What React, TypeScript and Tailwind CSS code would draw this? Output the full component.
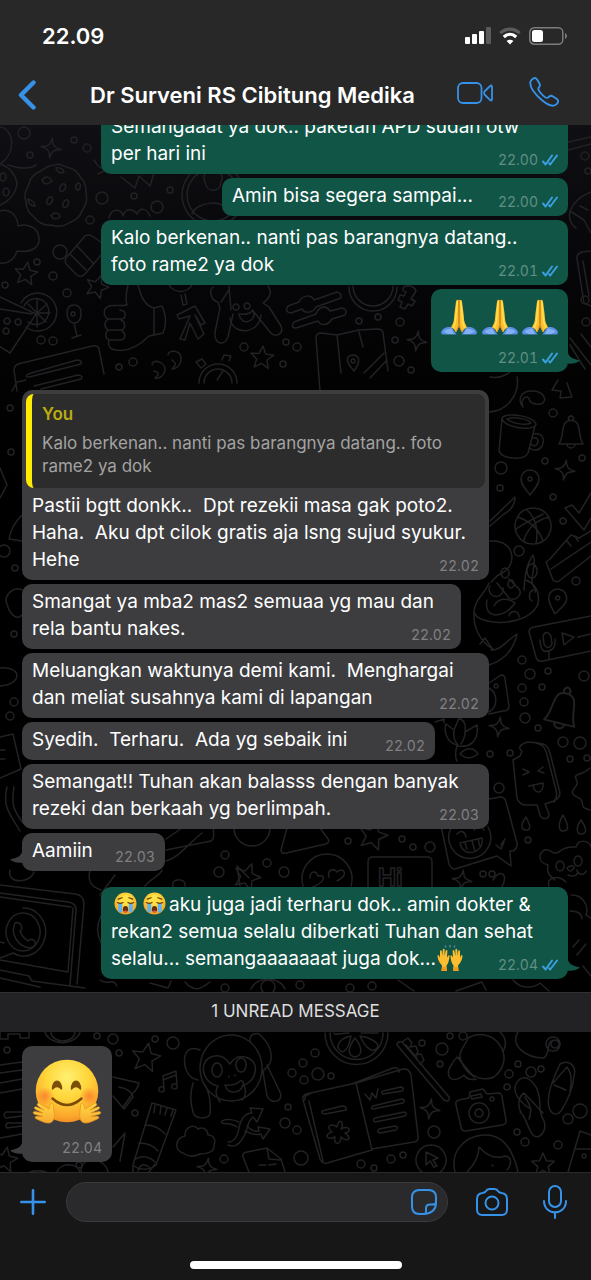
import type { ReactNode } from 'react';

type IconProps = { className?: string };

/* ---------- chat wallpaper ---------- */

const dots: [number, number, number][] = [
  [24, 133, 6], [30, 155, 3], [74, 140, 3], [87, 148, 4], [102, 198, 6], [134, 196, 3], [170, 190, 3], [157, 207, 6],
  [90, 220, 4], [60, 252, 7], [37, 262, 3], [53, 276, 4], [67, 293, 4], [5, 285, 3], [41, 340, 4], [53, 341, 4],
  [244, 347, 4], [286, 342, 3], [297, 347, 4], [133, 362, 4], [119, 367, 3], [359, 321, 3], [378, 317, 3], [400, 322, 4],
  [395, 340, 3], [399, 361, 5], [411, 370, 3], [283, 364, 3], [585, 156, 4], [588, 171, 3], [585, 300, 4], [586, 322, 4],
  [10, 408, 3], [11, 452, 3], [4, 551, 6], [15, 568, 3], [14, 634, 3], [14, 702, 4], [10, 716, 4], [553, 413, 4],
  [501, 468, 6], [500, 488, 3], [545, 461, 3], [582, 458, 3], [553, 497, 3], [563, 521, 3], [519, 551, 5], [576, 581, 4],
  [522, 660, 4], [530, 674, 5], [548, 671, 3], [522, 688, 4], [542, 687, 3], [584, 676, 5], [524, 702, 4], [525, 718, 5],
  [538, 728, 3], [563, 742, 5], [580, 743, 6], [490, 754, 3], [510, 753, 3], [570, 759, 3], [587, 758, 3], [499, 788, 5],
  [225, 855, 4], [219, 872, 5], [267, 863, 4], [284, 872, 5], [348, 841, 3], [402, 839, 3], [413, 847, 3], [430, 847, 5],
  [528, 840, 3], [483, 874, 3], [492, 874, 3], [268, 987, 7], [300, 985, 4], [350, 988, 4], [372, 986, 4], [225, 988, 4],
  [97, 1036, 3], [113, 1039, 5], [155, 1039, 3], [173, 1043, 6], [119, 1053, 3], [7, 1050, 3], [135, 1113, 3],
  [292, 1073, 4], [288, 1107, 3], [285, 1123, 5], [297, 1130, 4], [224, 1159, 4], [303, 1063, 4], [315, 1053, 4],
  [318, 1074, 6], [304, 1080, 4], [331, 1076, 3], [422, 1043, 3], [442, 1049, 6], [440, 1064, 3], [450, 1036, 3],
  [463, 1036, 4], [509, 1074, 4], [518, 1064, 3], [531, 1072, 5], [541, 1069, 3], [507, 1087, 3], [580, 1111, 7],
  [568, 1119, 5], [517, 1132, 3], [525, 1142, 4], [558, 1145, 4], [434, 1132, 6], [301, 1158, 7], [361, 1164, 4],
  [374, 1168, 3], [391, 1159, 4], [403, 1155, 3], [79, 1165, 3],
];

const stars: [number, number, number, number][] = [
  [26, 274, 12, 8], [97, 287, 12, 20], [262, 358, 12, 5], [373, 836, 15, 15], [146, 1058, 15, 10], [543, 1165, 12, 0],
  [247, 877, 14, 20], [5, 1160, 13, 10],
];

const sparkles: [number, number][] = [
  [51, 148], [417, 341], [565, 470], [499, 727], [430, 1109], [462, 880], [207, 1168],
];

const starPath = 'M0-1 .28-.36 .95-.31 .43.13 .59.81 0 .45-.59.81-.43.13-.95-.31-.28-.36Z';
const sparklePath = 'M0-10C1-3 3-1 10 0 3 1 1 3 0 10-1 3-3 1-10 0-3-1-1-3 0-10Z';
const bellPath = 'M-12 12C-8 6-9-2-7-7-5-13 5-13 7-7 9-2 8 6 12 12ZM-4 12a4 4 0 0 0 8 0M-2-12a2.500 2.500 0 1 1 4 0';
const pinPath = 'M0 12C-6 4-9 1-9-4a9 9 0 0 1 18 0C9 1 6 4 0 12ZM-2-4a2 2 0 1 0 4 0 2 2 0 1 0-4 0';

const doodles = [
  /* cookie */
  'M55 165c6-3 10 3 15 3 6 1 9 7 11 10 5 5 5 10 5 16 2 7-1 12-4 17-2 7-8 10-13 12-6 4-12 4-18 2-8 1-13-3-17-8-6-4-8-10-8-16-3-7 1-12 3-17 1-8 7-11 12-13 5-4 9-6 14-6M42 180c4-5 8-3 10 1-4 4-8 4-10-1M60 187c3-6 7-3 5 2-3 4-6 3-5-2M47 200c3-6 7-3 5 2-3 4-6 3-5-2M63 203c3-6 7-3 5 2-3 4-6 3-5-2M76 185c3-4 5-1 4 3-2 4-5 2-4-3M51 215c5-4 9-1 9 2-4 3-8 2-9-2M28 199c4 1 7 4 7 7-4 0-7-3-7-7M56 168c4-1 7 1 8 4-4 2-7 0-8-4',
  /* cloud and planet at the left edge */
  'M0 211c9-3 18 4 18 15 9-3 20 1 21 12 1 10-8 15-22 13-3 9-9 13-17 12M0 127c14 2 17 26 0 37M0 164c9 3 15 10 17 19-1 11-8 18-17 22M3 173a3 4 0 1 0 .1 0M6 188a3 4 0 1 0 .1 0',
  /* spool and megaphone */
  'M8 165c9 3 20 5 28 0M94 160c6 12 18 13 31 10M98 174l16-8M121 177l14 11 4-12 11 10 4-13',
  /* person */
  'M213 164a31 31 0 1 0 .1 0M213 169a26 26 0 1 0 .1 0M205 182a9 9 0 1 1 16 0c0 10-14 12-16 0M192 214c5-13 32-16 41 0M109 218c2-10 12-10 14-2 2-8 10-8 14-2 3-7 10-6 13 2',
  /* eraser */
  'M66 258 85 236q3-2 7 0l10 7M66 258q-2 4 1 7l10 10q4 3 8-1l17-20M70 254l16 16M77 246l16 17',
  /* pizza and citrus */
  'M0 297 36 314 10 353-4 344M0 309 32 314M7 318a3 3 0 1 0 .1 0M18 319a3 3 0 1 0 .1 0M6 328a3 3 0 1 0 .1 0M21 303A19 19 0 1 1 26 327M24 306a13 13 0 1 1 4 16M37 313 28 304M37 313V299M37 313 47 304M37 313h13M37 313l9 9M37 313v14',
  /* glass */
  'M67 313c0-6 3-8 7-8s7 2 7 8c0 8-4 10-7 10s-7-3-7-10M74 323l3 13M72 338l9-3M73 312a2 2 0 1 0 .1 0',
  /* thumbs up */
  'M128 285c-2 8-3 14-1 20-9 2-18-2-22 4-2 6 1 9 3 10-4 3-4 8 0 11-4 4-2 9 1 10-2 6 2 10 7 10 12 2 24-5 33-14l5-1V308c-9-2-13-11-16-23M154 308l8-2c4 9 5 18 1 27l-9 2M108 319h12c7 0 7-8 0-9M108 330h12c6 0 6-8 1-10M110 340h10c6 0 6-7 2-9',
  /* magnifier, arrow */
  'M169 285a13 12 0 0 0 23 0M181 295l2 10 4-1-2-10M180 339l10-23-11 3-2-4 18-9 10 17-4 2-6-10 9 19-6 5-8-16-5 17Z',
  /* monkey hands */
  'M213 287c-5 4-1 14 5 15l2 6-5 24c-1 12 9 15 13 5l5-23M221 302l8-12M229 286l2 24M268 286c5 7 1 13-5 17l6 4 12 19c3 9-6 12-11 6l-16-20M236 304a3 3 0 1 0 .1 0M247 303a3 3 0 1 0 .1 0M239 314c6 1 11 0 14-4 5 12-12 17-14 4M230 318c2 18 29 17 31-3',
  /* sliders */
  'M288 306l11-4c3-7 12-8 15-2l23-8q5 1 4 6l-25 9c-3 6-11 7-14 2l-11 4q-7-1-3-7M294 322l22-8c3-8 10-9 14-3l12-3q6 1 3 7l-13 4c-5 8-12 6-14 2l-22 7q-6 0-2-6',
  /* clock, bolt, phone */
  'M349 287a24 24 0 0 0 48 0M353 286a20 20 0 0 0 40 0M404 287c5-3 11 0 12 4l-5 8 4 2-3 5-4-2-3 5-5-2 2-5-4-2 2-5 4 1 2-4q-5-1-2-5',
  /* map */
  'M320 391 316 338q0-5 5-5l16 2 22-5 18-1q6 0 6 4l5 38M337 335l4 38M359 332l4 15M354 371c-8-9-9-14-2-16 8 0 9 6 2 16M353 359a2 2 0 1 0 .1 0M364 373l20-20M370 378l17-18',
  /* card, quotes, stopwatch */
  'M17 391 14 370q0-4 4-6l74-18q6-1 7 3l5 25M28 374l49-14q5 0 4 4l-52 13q-5 0-1-3M34 386l44-11q6 1 3 4l-40 10M152 365c0-7 14-3 13 5-1 6-6 9-10 8 5-4 4-6-1-7M168 355c0-6 13-5 13 3s-5 11-9 11c5-5 4-6 0-9M199 383a19 19 0 1 1 38 0M204 383a14 14 0 1 1 28 0M222 360l2-5 7 1-2 5M196 362l6-3 4 5-5 4ZM217 380l6-9',
  /* right edge */
  'M568 142l23-5M568 150l23-6M591 192c-8 3-17 9-21 19l14 9 7 13M570 211c-2 8 2 15 6 17M580 206l8 4M577 259q-1-5 5-7l9-1M577 259l7 44 7 3M583 261l6 35M570 338l21 27M570 345l15 24M581 334l10 13',
  /* mug, crescent, bolt, clock */
  'M502 418 499 451c2 8 25 10 29 2l7-27M502 418c5-7 35-1 34 7-4 7-34 2-34-7M507 419c8-3 21 0 24 4-6 3-20 0-24-4M534 434c9-2 11 6 8 12-3 5-9 5-12 2M533 438c5-1 6 3 4 6-2 3-4 2-6 0M531 391c-10 0-14 9-8 16-3-7 2-12 6-9 0 5 7 8 14 5 5-6-3-13-12-12M558 380l-6 10 9 1-1 7 12-1-5-14M490 377c12 2 22-4 24-12M489 412a30 30 0 0 0 28-35',
  /* basketball and check */
  'M533 508a18 18 0 1 0 .1 0M518 517c11 4 21 12 25 24M549 517c-13 3-22 12-25 23M527 510c8 7 12 20 9 33M516 529c10-7 20-11 27-15M565 508l7-3 7 8 12-20M565 508l19 22 7-12',
  /* sneaker */
  'M546 562l4-3 21-24 8 3 12-7M546 562l7 18q3 3 6 1l32-25M551 569l40-27M567 541l4 5M575 536l3 5M490 521l25-24q0 11-11 17l-14 12M490 541c25-2 28 24 12 32-7 3-8 7-11 9M505 568a4 5 0 1 0 .1 0M524 590c1-15 2-25 9-35 4 8-2 20-1 26 1 7 4 8 3 11M532 564a5 7 0 1 0 .1 0M511 580a3 4 0 1 0 .1 0',
  /* octopus */
  'M489 583c-5 12-14 16-15 29 4 15 55 15 64-8 2-12-3-20-12-24M487 600c-2 10 2 14 8 15 9 0 15-5 20-12-8-6-17-5-21 3M490 586a7 7 0 1 0 13 2M474 612c-1 15 6 30 19 37M491 650c9 1 14-8 26-16-3 14-12 26-28 31M480 644l5-6 8 12M509 616a5 5 0 0 1 10 1M533 590a5 6 0 0 0-1 11M497 583l12 15c6 4 14-3 10-9l-10-10',
  /* voice note card */
  'M591 616l-57 11q-5 1-5 5l7 25q1 5 7 4l48-10M543 636q3-7 8 0l1 8q-4 7-8 0ZM540 640q1 14 8 11 8-1 7-12M549 652v7M562 633l12 4-10 8ZM578 637l13-3',
  /* camera, tulip */
  'M489 683l12-8q4 0 4 4l4 27q0 5-6 5l-14 3M489 688a14 14 0 0 1 0 24M496 684a2 2 0 1 0 .1 0M457 761c-3-5-1-10 0-16-12-3-13-16-11-21l8 6 5-12c6 3 7 7 6 14l12-7c2 15-6 23-19 21M460 754c6-7 14-7 18 0-7 5-12 5-18 0M454 730c-1 7 0 11 4 15M465 732c0 5-2 9-4 12M435 722l9-3v4',
  /* ice pop */
  'M522 751c-6-4 1-8 6-9l10 1c8 1 10 3 12 10l9 36q3 8-5 12l-9 3 4 10c0 6-7 6-9 1l-3-10-12 0q-6-1-8-7l-4-38 7-4ZM536 743c8 2 9 5 11 12l9 35q2 6-2 12M523 769l6 3-6 3M543 767l-5 4 6 2M529 786l14-3c1 10-8 13-10 2M590 768c-8 8-17 5-14 11 3 5 0 7-3 11-3 7 7 6 9 11 1 5-1 7 9 9',
  /* laughing bubble */
  'M489 799l11-2q5 0 6 5l11 41q1 5-4 8l-3 0 1 15-14-10-42 13q-4 0-6-5l-9-43M451 828a21 21 0 1 0 37-1M457 834c4-5 8-2 9 3M474 830c4-6 8-3 10 0M460 843l22-5c3 15-19 21-22 5M465 843l2 6M472 841l3 10M478 839l2 7M496 845l5 4 3-7M501 845l4-6',
  /* drops */
  'M526 817c5 9 5 13 0 13s-6-5 0-13M563 815c6 11 6 15 1 16s-7-6-1-16M581 820c6 9 6 13 1 14s-7-6-1-14',
  /* bear */
  'M555 880c-8-6-8-10-7-15-13-3-8-17 0-15 5 1 4 5 11 2 6-6 14-5 17-5 3-9 14-6 15 0M560 861a4 5 0 1 0 .1 0M578 856a4 5 0 1 0 .1 0M567 868c3-3 8-3 7 0-3 4-5 4-7 0M568 875c7 3 11-1 9-5 1 5 7 6 9 1',
  /* shapes beneath the short reply */
  'M234 828a18 18 0 1 0 36 0M287 828l-6 22q0 4 5 3l40-9q4-2 2-5l-8-11M166 850l45-9q4-2 2-13M166 861c12-3 20-15 36-28M166 839l16-11M303 886a25 25 0 1 1 48 0M310 878c0-7 6-8 8-2 7-2 9 5-5 11M329 877c-2-8 5-9 8-5 6-6 13 3 0 9M368 887V862q0-5 5-5h54q5 0 5 5v25M240 886l-3-20 12 12M145 886c6-8 15-10 17-16M185 886c2-8-15-9-12 1M493 880c7-12 16-6 9 7M549 886c-3-8 8-12 17-4M10 870c-4 14 20 14 24 2',
  /* left edge between bubbles */
  'M12 391l5-9 9-2M22 590c-8-4-19 5-15 14 2 8 9 18 15 11M0 468l7 17-7 13M22 515c-9 9-12 17-13 24l13 2M0 668c22-2 23 16 0 18M0 737l13-3 8 35-21 9M0 750h5M0 759h5M7 787c-5 21 4 28 13 44M14 787c-3 18 0 24 9 36',
  /* laptop */
  'M0 885l75 9q9 1 9 10l-7 80M0 893l68 9q8 1 8 8l-6 75M0 897l71 10M0 960l68 12 5-64M0 970l29 6 3 5 53 7M0 978l40 9M23 908a22 24 0 1 1-10 45l-13 5M4 943l-4-1M23 913a17 19 0 1 0 .1 0M15 923c5-3 9 6 5 8 2 6 5 8 8 10 4-4 10 1 6 5-9 7-26-9-19-23',
  /* strip above the unread bar */
  'M100 980c8 6 13-3 17 6M150 983l18 5q2-4 3-7M185 982c11 13 19 4 25 0M251 989a18 15 0 0 1 34 0M398 980l16 11M456 991l26-9 4 8M513 980c8 10 21 8 27 3l9 8M571 895a15 15 0 0 1 15 20l5 3M570 911c8 0 12 3 12 8M573 947l6-7M577 955l9-11M583 966l8 10M100 895l15-20M90 870c-3 12 2 17 11 20M101 916a30 30 0 0 0 0 27',
  /* left of the last sticker message */
  'M0 1065l22-3M0 1073l22-3M0 1083l22-4M0 1093l22-4M22 1112H6q-4 3 0 6l16-2M22 1123H7q-2 3 0 5l15-2M0 1138l22-4M0 1031v8h8v-5h12v4h9v-7M45 1032a18 14 0 0 0 35 0M51 1032a12 9 0 0 0 24 0M113 1077l26 6q-2 7-6 10l-10 14M119 1087q12 2 14 10l-9 12-11-13M113 1147l12-14-5 28M108 1172a15 15 0 0 0-15-12c-8 0-12 5-12 12M57 1172a12 10 0 0 1 23 0M30 1172a15 8 0 0 1 16 0',
  /* music note */
  'M164 1088l-1-12 13-5 1 14M163 1080l13-5M164 1088c-3-3-6 0-5 3 3 2 6 1 5-3M177 1085c-4-3-6 0-5 3 3 2 6 1 5-3',
  /* monkey */
  'M231 1035a31 33 0 1 0 .1 0M220 1102c-4-6-5-12-2-16-18-4-20-28-3-30 8-1 12 4 15 8 5-8 12-9 18-6 13 6 7 24-4 27 2 5 2 11-2 15M217 1063a5 7 0 1 0 .1 0M241 1058a5 7 0 1 0 .1 0M229 1076l0 1M235 1075l0 1M225 1085q10 1 15-4 4-1 3 4c-3 9-15 10-18 0M198 1080c-11-2-15-14-13-24 2-8 9-9 15-6M193 1083c-3 10-3 19 0 29 2 8 15 7 17 2 1-12 0-21-5-29M250 1042c-1-8 7-12 13-4 8 8 11 21 5 28l-5 5M263 1072l4 24c4 9 17 6 13-4l-13-27',
  /* toothpaste */
  'M152 1103l24 7-20 55c-7 6-18 5-23 0ZM155 1105l-1 8M161 1106l-1 8M167 1108l-2 7M173 1110l-2 6M145 1125c8 0 15 3 20 9M139 1143c8 0 14 2 19 8M134 1160c8-6 16-3 21 2M138 1171q3-10 11-4M133 1165v8M155 1164l-6 8',
  /* cloud */
  'M183 1153c-9-3-8-15 2-17 0-10 9-12 13-7 6-3 10 2 10 6 6 0 8 5 6 10 1 9-12 9-14 9-8 4-13 2-17-1',
  /* crossing arrows */
  'M228 1142c8 0 10-8 11-14 3-15 11-15 13-15l-2-5 13 1-6 13-4-5c-6 4-4 9-8 17-4 9-10 14-17 11M237 1127c-9-6-17-1-15-6 4-3 13-1 17 1M247 1126c5 5 9 6 12 5l-1-4 12 2-7 10-2-5c-6 2-11-1-16-3',
  /* document */
  'M249 1172l-6-15q-1-4 4-5l20-4 14 11 4 13M267 1148l2 11 12 1M259 1165h7M269 1165l7-1',
  /* citrus slice */
  'M325 1033a31 31 0 0 0 63 0M330 1033a26 26 0 0 0 53 0M355 1038c-5 7-10 17 0 19 10-2 5-13 0-19M351 1036c-11 2-18 11-9 16 5-1 8-9 9-16M360 1036c5 11 12 18 17 12 4-5-8-11-17-12M349 1033c-8 0-15 3-15 0M361 1033h17',
  /* toothbrush */
  'M397 1045q0-4 5-3l47 55q1 6-5 3l-47-55M402 1042l6-4 4 5-2 4 6-1 2 6-2 3 5-1 3 6-4 4M406 1045l11 13',
  /* acorn and bauble */
  'M468 1038c10-6 24-4 31 6 9 12 5 25-5 33-7 3-15 2-19-1-9-2-15-15-15-21 1-7 6-11 8-17M460 1058q-4-2-8 6-6 8-2 14 6 4 14-3 4 6 12 4M457 1057l17 20M500 1032q9 8 3 20M518 1032c-8 13 7 26 26 26 6-5 3-14 7-17M553 1037a7 7 0 1 0 .1 0M555 1040a4 4 0 1 0 .1 0',
  /* sandals */
  'M531 1109c-8-4-17-13-16-22 3-11 12-12 18-4 6 6 7 14 7 24q0 7 4 14c3 9-3 18-10 15-6-5-9-22-14-24M521 1113c-4-9-2-17 3-20l19 20M525 1097c6 9 7 14 4 22M549 1107c-3-12 4-28 11-43 9-5 17 2 14 12-1 12-6 24-13 35-4 5-10 4-12-4M553 1083l14-16c4 5 5 14 3 24M554 1085l12 5',
  /* camera */
  'M456 1105q-1-4 3-5l10-2 1-6 13-3 4 5 11-1q4 0 4 4l4 23q1 4-4 5l-36 6q-5 0-5-4ZM471 1096l10-2 1 3-10 2ZM479 1103a10 10 0 1 0 .1 0M479 1109a4 4 0 1 0 .1 0M492 1097a2 2 0 1 0 .1 0',
  /* notebook */
  'M303 1100q-1-4 3-6l50-11 16 67-45 13q-5 1-7-4ZM356 1083l47-14q6-1 8 6l7 61q1 5-4 6l-42 7M352 1084l41-16q7-1 6 4M309 1101l14 60M305 1100q-1-5 5-6M322 1111l20-5q5 0 4 4l-21 4q-4 0-3-3M365 1094l5 6 2-7 4 5 2-9M383 1091l18-4q4 1 1 4l-19 3q-3-1 0-3M373 1106l29-7q4 1 1 4l-30 6q-3-1 0-3M375 1118l29-6q4 1 1 4l-30 6q-3-2 0-4M379 1129l16-3q4 1 1 4l-16 3q-4-1-1-4M337 1127c2-10 8-5 4 2 9-4 11 3 4 4 8 5 2 10-4 4 0 9-8 8-6 0-9 4-11-3-3-5-7-6-1-9 5-5',
  /* cursor, face, box */
  'M431 1145a15 15 0 1 0 .1 0M426 1152l12 6-5 2 4 6-3 1-4-6-4 4ZM455 1172c-5-20 9-36 29-37 19-1 29 15 34 37M467 1172c6-6 12-14 12-25 9 10 18 12 26 9 8 1 6 10 2 14M492 1165l1 1M568 1172l12-41 11 4M575 1149h16M584 1154a2 2 0 1 0 .1 0',
].join('');

function Wallpaper() {
  return (
    <svg
      aria-hidden="true"
      className="absolute inset-0 h-full w-full"
      viewBox="0 125 591 1047"
      preserveAspectRatio="xMidYMax slice"
      fill="none"
      stroke="#222225"
      strokeWidth="1.500"
      strokeLinecap="round"
      strokeLinejoin="round"
    >
      {dots.map(([x, y, r]) => (
        <circle key={`${x}-${y}`} cx={x} cy={y} r={r} />
      ))}
      {stars.map(([x, y, r, a]) => (
        <path
          key={`${x}-${y}`}
          d={starPath}
          transform={`translate(${x} ${y}) rotate(${a}) scale(${r})`}
          vectorEffect="non-scaling-stroke"
        />
      ))}
      {sparkles.map(([x, y]) => (
        <path key={`${x}-${y}`} d={sparklePath} transform={`translate(${x} ${y}) rotate(8)`} />
      ))}
      <path d={bellPath} transform="translate(571 432)" />
      <path d={bellPath} transform="translate(563 708) rotate(14) scale(1.300)" />
      <path d={pinPath} transform="translate(530 483)" />
      <path d={pinPath} transform="translate(557 602) rotate(10)" />
      <path d={doodles} />
      <text x="378" y="886" fontSize="24" fontFamily="Inter, sans-serif" fontWeight="700">
        Hi
      </text>
    </svg>
  );
}

/* ---------- icons ---------- */

const line = { fill: 'none', stroke: 'currentColor', strokeLinecap: 'round', strokeLinejoin: 'round' } as const;

const SignalIcon = ({ className }: IconProps) => (
  <svg className={className} viewBox="0 0 26 18" fill="#fff" aria-hidden="true">
    <rect x="0" y="10" width="5" height="7" rx="1" />
    <rect x="7" y="7" width="5" height="10" rx="1" />
    <rect x="14" y="4" width="5" height="13" rx="1" />
    <rect x="21" y="0" width="5" height="17" rx="1" fill="#5b5b5b" />
  </svg>
);

const WifiIcon = ({ className }: IconProps) => (
  <svg className={className} viewBox="0 0 22 18" fill="none" strokeWidth="3.200" aria-hidden="true">
    <path d="M1.300 6.200C7 .8 15 .8 20.700 6.200" stroke="#5b5b5b" />
    <path d="M4.800 10C8.500 6.600 13.500 6.600 17.200 10" stroke="#fff" />
    <path d="M11 17.500 7.600 14C9.500 12.300 12.500 12.300 14.400 14Z" fill="#fff" />
  </svg>
);

const BatteryIcon = ({ className }: IconProps) => (
  <svg className={className} viewBox="0 0 38 18" aria-hidden="true">
    <rect x=".8" y=".8" width="33" height="16.400" rx="4.500" fill="none" stroke="#7c7c7c" strokeWidth="1.500" />
    <rect x="3" y="3" width="11" height="12" rx="2.500" fill="#fff" />
    <path d="M36 6q2 .8 2 3t-2 3Z" fill="#7c7c7c" />
  </svg>
);

const BackIcon = ({ className }: IconProps) => (
  <svg className={className} viewBox="0 0 18 30" {...line} strokeWidth="4.400" aria-hidden="true">
    <path d="M15.500 2.500 3 15l12.500 12.500" />
  </svg>
);

const VideoIcon = ({ className }: IconProps) => (
  <svg className={className} viewBox="0 0 36 22" {...line} strokeWidth="1.800" aria-hidden="true">
    <rect x="1" y="1" width="23.500" height="20" rx="5" />
    <path d="M27.500 9.500 33.200 3.900q1.800-1.200 1.800 1V17.100q0 2.200-1.800 1L27.500 12.500q-1-1.500 0-3Z" />
  </svg>
);

const PhoneIcon = ({ className }: IconProps) => (
  <svg className={className} viewBox="0 0 32 32" {...line} strokeWidth="2" aria-hidden="true">
    <path d="M3 2.800C5.500.3 7.500.6 8.800 3L11.300 7.200C12.500 9.300 11.200 10.400 10.200 11.600 9.300 12.900 10.200 14.300 12 16.500 13.900 18.800 15.500 20.600 17.600 21.900 19.700 23 20.700 22 21.900 20.700 23 19.500 24.300 19.800 25.700 20.800L29.700 23.500C31.700 25 31.400 26.700 29.700 28.700 26.300 32.300 20.600 30.600 13.600 24.600 7.200 19 1.400 11.600 1.300 6.400 1.300 4.900 2 3.800 3 2.800Z" />
  </svg>
);

const PlusIcon = ({ className }: IconProps) => (
  <svg className={className} viewBox="0 0 26 26" {...line} strokeWidth="2.600" aria-hidden="true">
    <path d="M13 1.300v23.400M1.300 13h23.400" />
  </svg>
);

const StickerIcon = ({ className }: IconProps) => (
  <svg className={className} viewBox="0 0 26 26" {...line} strokeWidth="2" aria-hidden="true">
    <path d="M25 14V8.500Q25 1 17.500 1h-9Q1 1 1 8.500v9Q1 25 8.500 25H13.500Q25 23.500 25 14ZM14 25c1.500-1.200 1-3.500 1-6q0-3.500 4-3.500c3 0 5 .3 6-1.500" />
  </svg>
);

const CameraIcon = ({ className }: IconProps) => (
  <svg className={className} viewBox="0 0 32 28" {...line} strokeWidth="2" aria-hidden="true">
    <path d="M1 11q0-5.500 5.500-6Q9 4.700 9.800 3.300 11 1 13.500 1h5Q21 1 22.200 3.300 23 4.700 25.500 5 31 5.500 31 11v10.500q0 5.500-5.500 5.500h-19Q1 27 1 21.500Z" />
    <circle cx="16" cy="15" r="6.500" />
  </svg>
);

const MicIcon = ({ className }: IconProps) => (
  <svg className={className} viewBox="0 0 24 34" {...line} strokeWidth="2" aria-hidden="true">
    <rect x="6" y="1" width="12" height="21" rx="6" />
    <path d="M1 16c0 15 22 15 22 0M12 27.500V33" />
  </svg>
);

const ReadTicks = () => (
  <svg className="h-3 w-4" viewBox="0 0 16 12" {...line} stroke="#3b9fe0" strokeWidth="2" role="img" aria-label="Read">
    <path d="M1 7.500 3.600 10.500 10 1.500M7.200 9.300l1 1.200L15 1.500" />
  </svg>
);

/* ---------- emoji ---------- */

const Pray = () => (
  <svg className="h-9 w-9" viewBox="0 0 36 36" role="img" aria-label="Folded hands">
    <path
      id="arm"
      d="M0 33.500C1 29.500 5 27.500 10.500 28L15.500 35.500H1.500Q0 35 0 33.500Z"
      fill="#5b8fe6"
    />
    <path
      id="sleeve"
      d="M2 32.500Q6 29.500 10.500 29.500L13 35H7Z"
      fill="#82b1f5"
    />
    <path
      id="palm-half"
      d="M18 1.200Q15.400-.2 15 2.600L13.400 15 12.800 21.500Q12.500 24 10 28.200 13.500 29.500 15 33.500 18 29.500 18 25Z"
      fill="#fdc030"
    />
    <path id="light" d="M16.300 3 14.900 17Q14.700 24 12.500 28.500" fill="none" stroke="#ffe04c" strokeWidth="1.500" strokeLinecap="round" />
    <use href="#arm" transform="translate(36 0) scale(-1 1)" />
    <use href="#sleeve" transform="translate(36 0) scale(-1 1)" />
    <use href="#palm-half" transform="translate(36 0) scale(-1 1)" />
    <use href="#light" transform="translate(36 0) scale(-1 1)" />
    <path d="M18 1.500V25" stroke="#bf7412" strokeWidth="1.200" />
    <path d="M18 24q-.8 5-3 9M18 24q.8 5 3 9" fill="none" stroke="#e08f1e" strokeWidth="1" />
  </svg>
);

const Sob = () => (
  <svg className="mx-[3px] -mt-1 inline-block h-[23px] w-[23px]" viewBox="0 0 24 24" role="img" aria-label="Loudly crying face">
    <defs>
      <radialGradient id="sob" cx=".5" cy=".35" r=".65">
        <stop offset=".3" stopColor="#ffe345" />
        <stop offset="1" stopColor="#f39a1c" />
      </radialGradient>
    </defs>
    <circle cx="12" cy="12" r="11.500" fill="url(#sob)" />
    <path d="M4.500 11.500h4V21q-2.500 1-4-1ZM15.500 11.500h4V20q-1.500 2-4 1Z" fill="#5eb2f2" />
    <path d="M3.500 11q3 1.800 6 0M14.500 11q3 1.800 6 0M4.500 7.500 8.500 6M15.500 6l4 1.500" fill="none" stroke="#6b3b0c" strokeWidth="1.300" strokeLinecap="round" />
    <ellipse cx="12" cy="18" rx="2.700" ry="3.300" fill="#6b2f0b" />
    <path d="M10 20q2-1.500 4 0-2 2.600-4 0Z" fill="#e85a4d" />
  </svg>
);

const RaisedHands = () => (
  <svg className="-mt-1 inline-block h-7 w-7" viewBox="0 0 28 28" role="img" aria-label="Raising hands">
    <path d="M9 1.500 10 3.500M14 1v2.500M19 1.500 18 3.500" stroke="#5c89a0" strokeWidth="1.300" />
    <path
      id="hand"
      d="M5.500 27 6 21.500Q2 17.500 1.500 12q.3-1.500 1.600-.6L4 14 4 7q1-1.300 1.800 0L6.200 12 6.800 5.500q1-1.300 1.900 0L8.500 12 9.700 6.500q1.200-1 1.700.3L11 13.500l1.300-2q1.600-.6 1.200 1.200Q13 18.500 10.500 21.500l.3 5.500Z"
      fill="#fdbd2e"
    />
    <use href="#hand" transform="translate(28 0) scale(-1 1)" />
    <path d="M5.500 27 6 23h4.600l.2 4ZM22.500 27 22 23h-4.600l-.2 4Z" fill="#f29a1b" />
  </svg>
);

const Hug = () => (
  <svg className="h-[70px] w-[70px]" viewBox="0 0 70 70" role="img" aria-label="Hugging face">
    <defs>
      <radialGradient id="face" cx=".5" cy=".28" r=".75">
        <stop offset="0" stopColor="#fff071" />
        <stop offset=".45" stopColor="#ffd63a" />
        <stop offset=".85" stopColor="#fba52b" />
        <stop offset="1" stopColor="#ee861f" />
      </radialGradient>
      <radialGradient id="cheek">
        <stop offset="0" stopColor="#f9602a" stopOpacity=".6" />
        <stop offset="1" stopColor="#f9602a" stopOpacity="0" />
      </radialGradient>
      <linearGradient id="palm" x1="0" y1="0" x2="0" y2="1">
        <stop offset="0" stopColor="#ffd945" />
        <stop offset="1" stopColor="#f7a930" />
      </linearGradient>
    </defs>
    <circle cx="35" cy="33" r="31.300" fill="url(#face)" />
    <circle cx="13" cy="38" r="9" fill="url(#cheek)" />
    <circle cx="57" cy="38" r="9" fill="url(#cheek)" />
    <path d="M20.500 31c0-10.500 9-10.500 9 0q-4.500-5-9 0ZM39.500 31c0-10.500 9-10.500 9 0q-4.500-5-9 0Z" fill="#7a4f0a" stroke="#7a4f0a" strokeWidth="1.400" strokeLinejoin="round" />
    <path d="M20.500 40.500q14.500 13 29 0" fill="none" stroke="#7a4a07" strokeWidth="2.400" strokeLinecap="round" />
    <path
      id="palm-shape"
      d="M21.500 48c0-3-2.800-3.500-3.300-1L17 51 7.500 45.600c-2.200-1-3.200 1-1.400 2.300L12 52 4.500 49c-2.200-.7-2.800 1.400-.8 2.400L11 55 3 53.600c-2.200-.2-2.300 2-.4 2.600L11 58.500 4.500 58.300c-2 .2-1.800 2 0 2.600C9 62.800 13.500 65.500 17 65c5.200-.8 5.800-6 5.200-9.500Z"
      fill="url(#palm)"
      stroke="#e8921c"
      strokeWidth=".7"
    />
    <use href="#palm-shape" transform="translate(70 0) scale(-1 1)" />
  </svg>
);

/* ---------- messages ---------- */

type BubbleProps = {
  side: 'in' | 'out';
  width: string;
  time: string;
  tail?: boolean;
  quote?: ReactNode;
  className?: string;
  children: ReactNode;
};

function Bubble({ side, width, time, tail, quote, className = '', children }: BubbleProps) {
  const out = side === 'out';
  return (
    <article
      className={`relative max-w-full shrink-0 rounded-[10px] text-white ${out ? 'self-end bg-[#115547]' : 'self-start bg-[#3d3d3f]'} ${width} ${className}`}
    >
      {quote}
      <div className="flow-root px-2.5 pt-1 pb-[7px] text-[19px] leading-[27px] whitespace-pre-wrap">
        {children}
        <span
          className={`float-right mt-3 flex h-[15px] items-center gap-1 text-sm leading-4 tabular-nums ${out ? 'text-[#628f84]' : 'text-[#818183]'}`}
        >
          <time>{time}</time>
          {out && <ReadTicks />}
        </span>
      </div>
      {tail && (
        <svg
          aria-hidden="true"
          className={`absolute bottom-1 h-4 w-4 ${out ? '-right-3' : '-left-3 -scale-x-100'}`}
          viewBox="0 0 16 16"
          fill={out ? '#115547' : '#3d3d3f'}
        >
          <path d="M0 0h4c0 4 4 7 12 8.500C12 12 7 12 3 11.500L0 16Z" />
        </svg>
      )}
    </article>
  );
}

export default function App() {
  return (
    <div className="flex h-screen flex-col bg-black font-['Inter','Liberation_Sans',sans-serif]">
      <header className="shrink-0 bg-[#282828] pb-[7px] text-white">
        <div className="flex h-[72px] items-center justify-between pr-6 pl-[42px]">
          <time className="text-[22px] leading-7 font-semibold">22.09</time>
          <div className="flex items-center gap-2">
            <SignalIcon className="h-[18px] w-[26px]" />
            <WifiIcon className="h-[18px] w-[22px]" />
            <BatteryIcon className="h-[18px] w-[38px]" />
          </div>
        </div>
        <div className="flex h-[46px] items-center pr-8 text-[#3592e8]">
          <button type="button" aria-label="Back" className="flex w-12 shrink-0 pl-[18px]">
            <BackIcon className="h-[30px] w-[18px]" />
          </button>
          <h1 className="flex-1 truncate text-center text-[22px] leading-8 font-semibold text-white">
            Dr Surveni RS Cibitung Medika
          </h1>
          <button type="button" aria-label="Video call" className="mr-9 mb-1 shrink-0">
            <VideoIcon className="h-[22px] w-9" />
          </button>
          <button type="button" aria-label="Voice call" className="mb-1.5 shrink-0">
            <PhoneIcon className="h-[30px] w-[30px]" />
          </button>
        </div>
      </header>

      <main className="relative flex min-h-0 flex-1 flex-col justify-end overflow-hidden bg-linear-to-b from-[#101014] to-black to-50%">
        <Wallpaper />
        <section className="relative flex shrink-0 flex-col gap-1 pr-[23px] pl-[22px]">
          <Bubble side="out" width="w-[467px]" time="22.00">
            {'Semangaaat ya dok.. paketan APD sudah otw\nper hari ini'}
          </Bubble>
          <Bubble side="out" width="w-[346px]" time="22.00">
            Amin bisa segera sampai...
          </Bubble>
          <Bubble side="out" width="w-[467px]" time="22.01">
            {'Kalo berkenan.. nanti pas barangnya datang..\nfoto rame2 ya dok'}
          </Bubble>
          <Bubble side="out" width="w-[137px]" time="22.01" tail>
            <div className="flex h-[45px] justify-between pt-1.5">
              <Pray />
              <Pray />
              <Pray />
            </div>
          </Bubble>

          <Bubble
            side="in"
            width="w-[467px]"
            time="22.02"
            className="mt-[14px]"
            quote={
              <blockquote className="mx-1 mt-1 flex h-[94px] flex-col overflow-hidden rounded-lg border-l-6 border-[#ffeb00] bg-[#2c2c2c] px-2.5 pt-[9px] text-[17px] leading-[23px] text-[#a3a3a3]">
                <strong className="mb-1.5 font-semibold text-[#b9ab10]">You</strong>
                Kalo berkenan.. nanti pas barangnya datang.. foto rame2 ya dok
              </blockquote>
            }
          >
            {'Pastii bgtt donkk..  Dpt rezekii masa gak poto2.\nHaha.  Aku dpt cilok gratis aja lsng sujud syukur.\nHehe'}
          </Bubble>
          <Bubble side="in" width="w-[439px]" time="22.02">
            {'Smangat ya mba2 mas2 semuaa yg mau dan\nrela bantu nakes.'}
          </Bubble>
          <Bubble side="in" width="w-[467px]" time="22.02">
            {'Meluangkan waktunya demi kami.  Menghargai\ndan meliat susahnya kami di lapangan'}
          </Bubble>
          <Bubble side="in" width="w-[413px]" time="22.02">
            {'Syedih.  Terharu.  Ada yg sebaik ini'}
          </Bubble>
          <Bubble side="in" width="w-[467px]" time="22.03">
            {'Semangat!! Tuhan akan balasss dengan banyak\nrezeki dan berkaah yg berlimpah.'}
          </Bubble>
          <Bubble side="in" width="w-[143px]" time="22.03" tail>
            Aamiin
          </Bubble>

          <Bubble side="out" width="w-[467px]" time="22.04" tail className="mt-3">
            <Sob />
            <Sob />
            {'aku juga jadi terharu dok.. amin dokter &\nrekan2 semua selalu diberkati Tuhan dan sehat\nselalu... semangaaaaaaat juga dok...'}
            <RaisedHands />
          </Bubble>
        </section>

        <div className="relative mt-[13px] mb-[14px] flex h-10 shrink-0 items-center justify-center border-t border-[#303033] bg-[#222224] pb-[3px] text-[17px] leading-6 text-[#dededf]">
          1 UNREAD MESSAGE
        </div>

        <section className="relative flex shrink-0 flex-col pb-2.5 pl-[22px]">
          <Bubble side="in" width="w-[90px]" time="22.04" tail>
            <div className="flex h-[78px] pt-2">
              <Hug />
            </div>
          </Bubble>
        </section>
      </main>

      <footer className="flex h-[108px] shrink-0 flex-col border-t border-[#2a2a2b] bg-[#171717] text-[#3592e8]">
        <form className="flex h-[58px] items-center pr-6 pl-5" onSubmit={(e) => e.preventDefault()}>
          <button type="button" aria-label="Attach">
            <PlusIcon className="h-[26px] w-[26px]" />
          </button>
          <div className="ml-5 flex h-10 min-w-0 flex-1 items-center rounded-full border border-[#3a3a3c] bg-[#2a2a2c] pr-2.5">
            <input type="text" aria-label="Message" className="h-full min-w-0 flex-1 bg-transparent pl-4 text-[19px] text-white outline-none" />
            <button type="button" aria-label="Stickers">
              <StickerIcon className="h-[26px] w-[26px]" />
            </button>
          </div>
          <button type="button" aria-label="Camera" className="ml-7">
            <CameraIcon className="h-7 w-8" />
          </button>
          <button type="button" aria-label="Record voice message" className="ml-[35px]">
            <MicIcon className="h-[34px] w-6" />
          </button>
        </form>
        <div className="mt-auto mb-[11px] h-2 w-[212px] self-center rounded-full bg-white" />
      </footer>
    </div>
  );
}
